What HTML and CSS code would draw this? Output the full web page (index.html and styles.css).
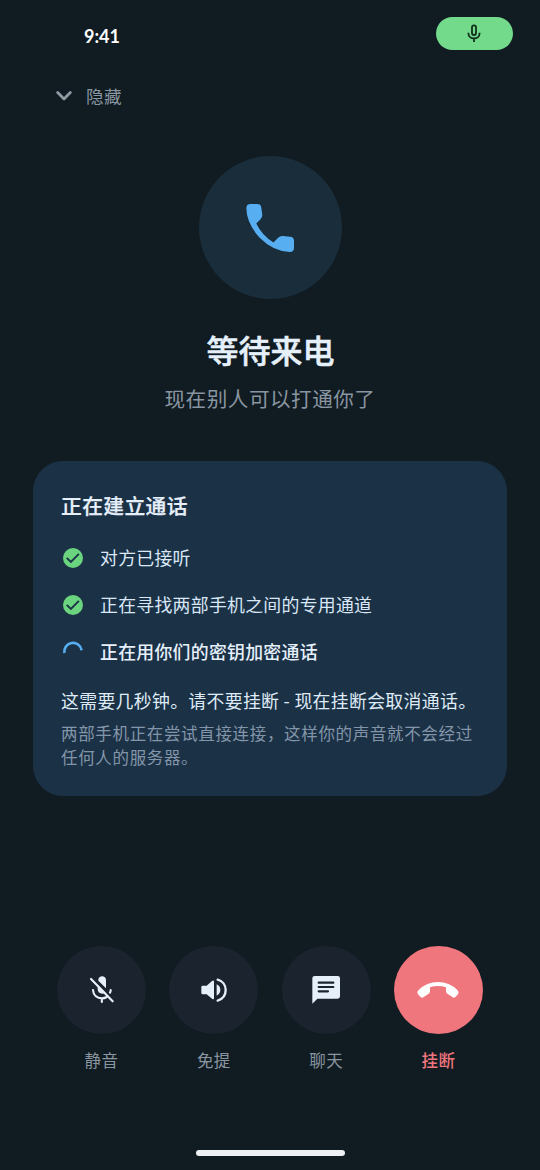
FILE: index.html
```
<!DOCTYPE html>
<html lang="zh-CN">
<head>
<meta charset="utf-8">
<title>等待来电</title>
<link rel="stylesheet" href="styles.css">
</head>
<body>
<div class="screen">
  <header class="status">
    <time class="clock">9:41</time>
    <div class="mic-pill">
      <svg width="14" height="19" viewBox="0 0 42 57" fill="none" stroke="#10301b" stroke-width="5.4" stroke-linecap="butt">
        <rect x="15" y="4" width="12" height="29" rx="6"/>
        <path d="M4 26C4 49 38 49 38 26M21 43V54"/>
      </svg>
    </div>
  </header>

  <button class="hide">
    <svg width="16" height="10" viewBox="0 0 16 10" fill="none" stroke="#8f9aa5" stroke-width="2.8" stroke-linecap="round" stroke-linejoin="round"><path d="M1.7 1.6 8 7.9l6.3-6.3"/></svg>
    <span>隐藏</span>
  </button>

  <main class="content">
    <div class="avatar">
      <svg width="48" height="48" viewBox="198 191 145 145" fill="#57aef0"><path d="M212 191H231Q243 191 244 201L247 222Q248 231 242 237L229 250Q247 287 281 307L295 293Q301 287 310 288L331 290Q343 291 343 302V323Q343 336 330 336Q281 335 240 294Q200 250 199 204Q199 191 212 191Z"/></svg>
    </div>
    <h1 class="heading">等待来电</h1>
    <p class="subtitle">现在别人可以打通你了</p>

    <section class="card">
      <h2 class="card-title">正在建立通话</h2>
      <ul class="steps">
        <li class="step">
          <svg class="step-icon" viewBox="0 0 24 24"><circle cx="12" cy="12" r="10" fill="#6ad47e"/><path d="m5.7 11.900 4.200 4.100 8-8.100" fill="none" stroke="#1b3146" stroke-width="1.900"/></svg>
          <span class="text">对方已接听</span>
        </li>
        <li class="step">
          <svg class="step-icon" viewBox="0 0 24 24"><circle cx="12" cy="12" r="10" fill="#6ad47e"/><path d="m5.7 11.900 4.200 4.100 8-8.100" fill="none" stroke="#1b3146" stroke-width="1.900"/></svg>
          <span class="text">正在寻找两部手机之间的专用通道</span>
        </li>
        <li class="step step-active">
          <svg class="step-icon" viewBox="0 0 24 24"><path d="M3.4 13A8.700 8.700 0 0 1 20.600 10.200" fill="none" stroke="#57aef0" stroke-width="2.7"/></svg>
          <span class="text">正在用你们的密钥加密通话</span>
        </li>
      </ul>
      <p class="notice">这需要几秒钟。请不要挂断 - 现在挂断会取消通话。</p>
      <p class="detail">两部手机正在尝试直接连接，这样你的声音就不会经过任何人的服务器。</p>
    </section>
  </main>

  <nav class="controls">
    <button class="control">
      <span class="disc">
        <svg width="26" height="28" viewBox="116 137 78 84" fill="none" stroke="#e6f0fb" stroke-width="6.4" stroke-linecap="round">
          <path d="M144 151V149C144 134 167 134 167 149V174ZM142 163 166 187C154 194 142 188 142 176Z" fill="#e6f0fb" stroke="none"/>
          <path d="M128 179C129 196 141 204 155 204Q163 204 169 200M181 179Q181 184 179 187M154.500 204V215M122 146 187 213"/>
        </svg>
      </span>
      <span class="label">静音</span>
    </button>
    <button class="control">
      <span class="disc">
        <svg width="26" height="26" viewBox="453 141 78 78" fill="#e6f0fb">
          <path d="M458 167H470L486 153Q492 149 492 156V204Q492 211 486 206L470 193H458Q454 193 454 189V171Q454 167 458 167ZM500 163Q511 168 511 180Q511 191 500 197Z"/>
          <path d="M503 149C535 158 535 202 503 212" fill="none" stroke="#e6f0fb" stroke-width="7" stroke-linecap="round"/>
        </svg>
      </span>
      <span class="label">免提</span>
    </button>
    <button class="control">
      <span class="disc">
        <svg width="28" height="28" viewBox="126 138 84 84">
          <path d="M134 138H203Q210 138 210 145V199Q210 206 203 206H142L127 221V145Q127 138 134 138Z" fill="#e6f0fb"/>
          <path d="M146 158H190M146 171H190M146 184H174" fill="none" stroke="#1b232e" stroke-width="6.500" stroke-linecap="round"/>
        </svg>
      </span>
      <span class="label">聊天</span>
    </button>
    <button class="control control-end">
      <span class="disc">
        <svg width="42" height="16" viewBox="443 154 126 48" fill="#fff"><path d="M506 154Q540 154 564 178Q571 186 564 193L558 199Q554 203 549 199L534 189Q530 186 530 181V170Q506 162 482 170V181Q482 186 478 189L463 199Q458 203 454 199L447 192Q441 185 448 178Q472 154 506 154Z"/></svg>
      </span>
      <span class="label">挂断</span>
    </button>
  </nav>
  <div class="home-bar"></div>
</div>
</body>
</html>
```
FILE: styles.css
```
* { box-sizing: border-box; }
body { margin: 0; background: #101b22; }
h1, h2, p, ul { margin: 0; padding: 0; }
button { border: 0; padding: 0; background: none; color: inherit; font: inherit; letter-spacing: inherit; }
svg { display: block; flex: none; }

.screen {
  display: flex;
  flex-direction: column;
  width: 540px;
  height: 1170px;
  background: #101b22;
  color: #e6f0fb;
  font-family: "Noto Sans CJK SC", sans-serif;
}

.status {
  display: flex;
  justify-content: space-between;
  align-items: center;
  height: 67px;
  padding: 0 27.500px 0 84px;
}
.clock { font: 700 18px/24px Lato, sans-serif; color: #fff; padding-top: 4px; }
.mic-pill {
  display: grid;
  place-items: center;
  width: 77px;
  height: 33px;
  border-radius: 17px;
  background: #74da8b;
}

.hide {
  display: flex;
  align-items: center;
  align-self: flex-start;
  gap: 14px;
  height: 57px;
  margin-left: 56px;
  color: #8995a0;
  font-size: 17.6px;
  letter-spacing: 0.3px;
}
.hide span { padding-bottom: 1px; }

.content { display: flex; flex-direction: column; align-items: center; padding: 32px 33px 0; }
.avatar {
  display: grid;
  place-items: center;
  width: 143px;
  height: 143px;
  border-radius: 50%;
  background: #1a2d3b;
}
.heading { margin-top: 28px; padding-left: 1px; font-size: 32px; line-height: 44px; font-weight: 500; -webkit-text-stroke: 0.5px currentColor; }
.subtitle { margin-top: 12px; font-size: 20.6px; line-height: 30px; letter-spacing: 0.5px; color: #8995a0; }

.card {
  width: 474px;
  height: 335px;
  margin-top: 48px;
  padding: 29px 28px 0;
  border-radius: 30px;
  background: #1b3146;
}
.card-title { font-size: 20.8px; line-height: 30px; font-weight: 500; letter-spacing: 0.35px; -webkit-text-stroke: 0.25px currentColor; }
.steps { display: grid; gap: 21px; margin-top: 25px; list-style: none; }
.step { display: flex; align-items: center; gap: 15px; height: 26px; font-size: 17.9px; letter-spacing: 0.26px; color: #d9e7f6; }
.step .text { padding-bottom: 2px; }
.step-icon { width: 24px; height: 24px; }
.step-active { color: #e6f0fb; font-weight: 500; }
.notice { margin-top: 22px; font-size: 17.9px; line-height: 26px; letter-spacing: 0.3px; white-space: nowrap; color: #dfebf7; }
.detail { margin-top: 8px; font-size: 16.5px; line-height: 24px; letter-spacing: 0.66px; color: #8396a9; }

.controls { display: flex; justify-content: space-between; margin-top: 150px; padding: 0 57px; }
.control { display: flex; flex-direction: column; align-items: center; gap: 13px; color: #8995a0; }
.disc {
  display: grid;
  place-items: center;
  width: 89px;
  height: 88px;
  border-radius: 50%;
  background: #1b232e;
}
.label { font-size: 16.5px; line-height: 26px; letter-spacing: 0.4px; }
.control-end { color: #ef767d; font-weight: 500; }
.control-end .disc { background: #ef767d; }

.home-bar { align-self: center; width: 149px; height: 6px; margin: auto 0 14px; border-radius: 3px; background: #eef1f3; }
```
